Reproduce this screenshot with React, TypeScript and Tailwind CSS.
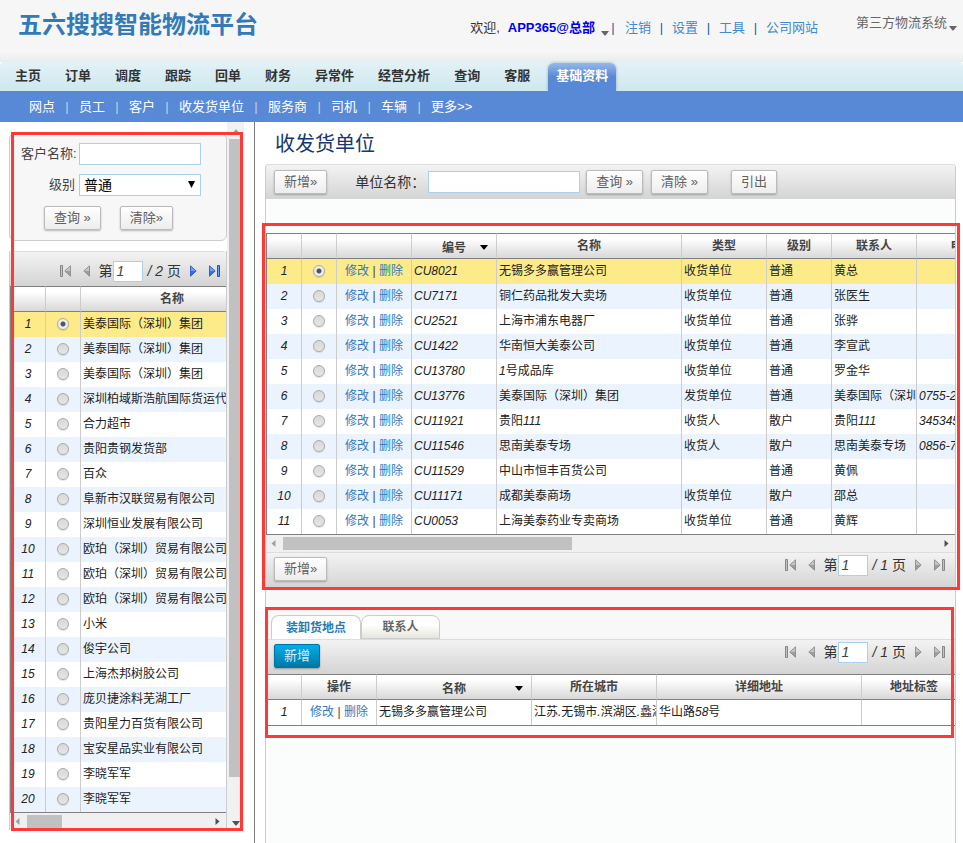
import type { ReactNode } from "react";

const NAV = ["主页", "订单", "调度", "跟踪", "回单", "财务", "异常件", "经营分析", "查询", "客服"];
const SUB_NAV = ["网点", "员工", "客户", "收发货单位", "服务商", "司机", "车辆", "更多>>"];
const USER_LINKS = ["注销", "设置", "工具", "公司网站"];

const CUSTOMERS = [
  "美泰国际（深圳）集团",
  "美泰国际（深圳）集团",
  "美泰国际（深圳）集团",
  "深圳柏域斯浩航国际货运代",
  "合力超市",
  "贵阳贵钢发货部",
  "百众",
  "阜新市汉联贸易有限公司",
  "深圳恒业发展有限公司",
  "欧珀（深圳）贸易有限公司",
  "欧珀（深圳）贸易有限公司",
  "欧珀（深圳）贸易有限公司",
  "小米",
  "俊宇公司",
  "上海杰邦树胶公司",
  "庞贝捷涂料芜湖工厂",
  "贵阳星力百货有限公司",
  "宝安星品实业有限公司",
  "李晓军军",
  "李晓军军",
];

const UNITS = [
  ["CU8021", "无锡多多赢管理公司", "收货单位", "普通", "黄总", ""],
  ["CU7171", "铜仁药品批发大卖场", "收货单位", "普通", "张医生", ""],
  ["CU2521", "上海市浦东电器厂", "收货单位", "普通", "张骅", ""],
  ["CU1422", "华南恒大美泰公司", "收货单位", "普通", "李宣武", ""],
  ["CU13780", "1号成品库", "收货单位", "普通", "罗金华", ""],
  ["CU13776", "美泰国际（深圳）集团", "发货单位", "普通", "美泰国际（深圳）集团", "0755-2"],
  ["CU11921", "贵阳111", "收货人", "散户", "贵阳111", "345345"],
  ["CU11546", "思南美泰专场", "收货人", "散户", "思南美泰专场", "0856-7"],
  ["CU11529", "中山市恒丰百货公司", "", "普通", "黄佩", ""],
  ["CU11171", "成都美泰商场", "收货单位", "散户", "邵总", ""],
  ["CU0053", "上海美泰药业专卖商场", "收货单位", "普通", "黄辉", ""],
];

function Caret({ className }: { className: string }) {
  return (
    <svg viewBox="0 0 8 5" className={`h-[5px] w-2 shrink-0 fill-current ${className}`} aria-hidden="true">
      <path d="M0 0h8L4.5 4.5h-1z" />
    </svg>
  );
}

function GrayButton({ children }: { children: ReactNode }) {
  return (
    <button
      type="button"
      className="h-6 shrink-0 whitespace-nowrap rounded-xs border border-[#bbb] bg-linear-to-b from-white to-[#ededed] px-[9px] text-[13px] leading-5 text-[#606060] shadow-[0_1px_2px_rgba(0,0,0,0.25)]"
    >
      {children}
    </button>
  );
}

function StepIcon({ kind, active }: { kind: "first" | "prev" | "next" | "last"; active?: boolean }) {
  const flip = kind === "next" || kind === "last";
  const bar = kind === "first" || kind === "last";
  const dark = active ? "#1c50c8" : "#858585";
  const light = active ? "#6ba0f2" : "#c4c4c4";
  const base = bar ? 4 : 0;
  const width = bar ? 11 : 7;
  return (
    <svg width={width} height="12" viewBox={`0 0 ${width} 12`} className={flip ? "-scale-x-100" : ""} aria-hidden="true">
      {bar && <path d="M.5.5h2v11h-2z" fill={light} stroke={dark} strokeWidth="1" />}
      <path d={`M${base + 6.5} .8v10.4L${base + 0.8} 6z`} fill={light} stroke={dark} strokeWidth="0.8" />
      <path d={`M${base + 6.5} 6v5.2L${base + 0.8} 6z`} fill={dark} opacity="0.6" />
    </svg>
  );
}

function Pager({ total, active, label }: { total: number; active?: boolean; label: string }) {
  return (
    <div className="flex shrink-0 items-center text-sm text-[#333] italic">
      <button type="button" aria-label="首页" className="mr-3">
        <StepIcon kind="first" />
      </button>
      <button type="button" aria-label="上一页" className="mr-2">
        <StepIcon kind="prev" />
      </button>
      <label className="flex items-center">
        <span className="leading-5">第</span>
        <input
          aria-label={label}
          defaultValue="1"
          className="ml-px h-[21px] w-[30px] border border-[#a9d2e8] bg-white pl-[2px] text-sm italic text-[#444] outline-none"
        />
      </label>
      <span className="ml-1 leading-5">/ {total}</span>
      <span className="mr-[9px] ml-1 leading-5">页</span>
      <button type="button" aria-label="下一页" className="mr-3">
        <StepIcon kind="next" active={active} />
      </button>
      <button type="button" aria-label="末页">
        <StepIcon kind="last" active={active} />
      </button>
    </div>
  );
}

function Th({ children, sort }: { children?: ReactNode; sort?: boolean }) {
  return (
    <th className="h-[26px] overflow-hidden whitespace-nowrap border-y border-r border-y-[#808080] border-r-[#ccc] bg-linear-to-b from-white from-20% to-[#d8d8d8] p-0 text-center text-xs leading-4 font-bold text-[#444]">
      {sort ? (
        <span className="grid grid-cols-[1fr_auto_1fr] items-center pt-[3px]">
          <span />
          <span>{children}</span>
          <Caret className="mr-2 justify-self-end text-black" />
        </span>
      ) : (
        children
      )}
    </th>
  );
}

function Td({ children, center }: { children?: ReactNode; center?: boolean }) {
  return (
    <td
      className={`h-[25px] overflow-hidden whitespace-nowrap border-r border-[#ccc] pt-0 pb-[2px] leading-4 ${center ? "text-center" : "pl-[2px]"}`}
    >
      {children}
    </td>
  );
}

function Radio({ name, label, checked }: { name: string; label: string; checked: boolean }) {
  return (
    <input
      type="radio"
      name={name}
      aria-label={label}
      defaultChecked={checked}
      className="mx-auto block size-3 appearance-none rounded-full border border-[#aaa] bg-linear-to-b from-[#d8d8d8] to-[#e6e6e6] shadow-[0_1px_1px_rgba(0,0,0,0.12)] checked:bg-[radial-gradient(circle,#555_0_2px,#eee_3px)]"
    />
  );
}

function RowLinks() {
  return (
    <span className="flex items-center justify-center text-[#337ab7]">
      <a href="#edit">修改</a>
      <span className="w-2.5 text-center not-italic text-[#444]">|</span>
      <a href="#delete">删除</a>
    </span>
  );
}

function rowColor(i: number) {
  if (i === 0) return "bg-[#fceb88]";
  return i % 2 ? "bg-[#ebf4fe]" : "bg-white";
}

const TABLE = "table-fixed border-separate border-spacing-0 text-xs text-[#222] italic";

function HScroll({ thumb }: { thumb: string }) {
  return (
    <div className="flex h-[17px] items-center bg-[#f0f0f0] px-1" aria-hidden="true">
      <svg className="size-[7px] fill-[#a0a0a0]" viewBox="0 0 7 7">
        <path d="M5.5 0v7L1.5 3.5z" />
      </svg>
      <div className={`ml-[6px] h-[13px] bg-[#c1c1c1] ${thumb}`} />
      <svg className="mr-px ml-auto size-[7px] fill-[#505050]" viewBox="0 0 7 7">
        <path d="M1.5 0v7l4-3.5z" />
      </svg>
    </div>
  );
}

function Header() {
  return (
    <header>
      <div className="flex h-[62px] items-start bg-linear-to-b from-[#f6f6f6] from-85% to-[#e6ecec] pr-1.5 pl-[18px]">
        <h1 className="mt-[7px] text-2xl leading-9 font-bold whitespace-nowrap text-[#337ab7]">五六搜搜智能物流平台</h1>
        <div className="mt-[18px] ml-auto flex items-center text-[13px] leading-5 whitespace-nowrap text-[#333]">
          <span className="mr-2">欢迎,</span>
          <a href="#account" className="font-bold text-[#0000ee]">
            APP365@总部
          </a>
          <Caret className="mt-2.5 ml-1.5 text-[#666]" />
          {USER_LINKS.map((item, i) => (
            <span key={item} className="flex">
              <span className={`text-center text-[#1c5ca6] ${i === 0 ? "mr-2 w-2" : "w-[21px]"}`}>|</span>
              <a href="#user" className="text-[#428bca]">
                {item}
              </a>
            </span>
          ))}
        </div>
        <button type="button" className="mt-[13px] ml-[38px] flex items-center text-[13px] leading-5 whitespace-nowrap text-[#666]">
          第三方物流系统
          <Caret className="mt-2.5 ml-[2px]" />
        </button>
      </div>
      <nav className="flex h-[29px] items-stretch rounded-t bg-linear-to-b from-[#e3f2f7] to-[#cde8ee] pl-[3px] text-[13px] leading-7 font-bold whitespace-nowrap text-[#333]">
        {NAV.map((item) => (
          <a key={item} href="#nav" className="px-3">
            {item}
          </a>
        ))}
        <a
          href="#base"
          className="mt-px ml-1.5 rounded-t-md bg-linear-to-b from-[#96b8e8] to-[#5889d7] to-50% px-2 leading-[26px] text-white shadow-[0_0_3px_rgba(0,0,0,0.3)]"
        >
          基础资料
        </a>
      </nav>
      <nav className="relative flex h-[31px] items-center bg-[#5889d7] pl-[29px] text-[13px] leading-5 whitespace-nowrap text-white">
        {SUB_NAV.map((item, i) => (
          <span key={item} className="flex">
            {i > 0 && <span className="w-6 text-center text-[#c8d0dc]">|</span>}
            <a href="#sub">{item}</a>
          </span>
        ))}
      </nav>
    </header>
  );
}

function Sidebar() {
  const field = "h-[22px] w-[122px] border border-[#a9d2e8] bg-white outline-none";
  return (
    <aside className="w-[255px] shrink-0 border-r border-[#808080] pr-2.5 pl-[9px]">
      <div className="relative flex">
        <div className="min-w-0 flex-1 pt-[11px]">
          <form className="flex flex-col rounded-md border border-[#ccc] bg-[#f7f7f7] pt-[9px] pb-2.5 pl-[11px] text-[13px] leading-5 text-[#444]">
            <div className="flex items-center">
              <label htmlFor="customer" className="w-[54px] text-right whitespace-nowrap">
                客户名称:
              </label>
              <input id="customer" className={`ml-1 ${field}`} />
            </div>
            <div className="mt-[9px] flex items-center">
              <label htmlFor="level" className="w-[54px] text-right">
                级别
              </label>
              <div className="relative ml-1 flex">
                <select id="level" className={`appearance-none pl-1 text-sm leading-5 text-black ${field}`}>
                  <option>普通</option>
                </select>
                <svg className="pointer-events-none absolute top-[7px] right-1.5 size-[7px]" viewBox="0 0 7 7" aria-hidden="true">
                  <path d="M0 0h7L3.5 7z" />
                </svg>
              </div>
            </div>
            <div className="mt-2.5 ml-[23px] flex gap-[19px]">
              <GrayButton>查询 »</GrayButton>
              <GrayButton>清除»</GrayButton>
            </div>
          </form>
          <div className="mt-2.5 border-r border-l border-[#ccc]">
            <div className="flex h-[35px] items-center justify-end rounded-t border-t border-[#ddd] bg-linear-to-b from-[#f3f3f3] to-[#d4d4d4] pt-1 pr-1.5">
              <Pager total={2} active label="客户页码" />
            </div>
            <div className="overflow-hidden border-b border-l border-[#808080]">
              <table className={`w-[253px] ${TABLE}`}>
                <colgroup>
                  <col className="w-[35px]" />
                  <col className="w-[35px]" />
                  <col className="w-[183px]" />
                </colgroup>
                <thead>
                  <tr>
                    <Th />
                    <Th />
                    <Th>名称</Th>
                  </tr>
                </thead>
                <tbody>
                  {CUSTOMERS.map((name, i) => (
                    <tr key={i} className={rowColor(i)}>
                      <Td center>{i + 1}</Td>
                      <Td center>
                        <Radio name="customer-row" label={name} checked={i === 0} />
                      </Td>
                      <Td>{name}</Td>
                    </tr>
                  ))}
                </tbody>
              </table>
            </div>
            <HScroll thumb="w-[35px]" />
          </div>
        </div>
        <div className="flex w-[17px] shrink-0 flex-col items-center bg-[#f1f1f1] pt-[7px] pb-1" aria-hidden="true">
          <Caret className="rotate-180 text-[#a0a0a0]" />
          <div className="mt-[5px] h-[638px] w-[13px] bg-[#c1c1c1]" />
          <Caret className="mt-auto text-[#505050]" />
        </div>
        <div className="pointer-events-none absolute top-2.5 right-px -bottom-px left-[2px] border-3 border-[#ff3838]" />
      </div>
    </aside>
  );
}

const BAR = "flex items-center bg-linear-to-b from-[#f3f3f3] to-[#d4d4d4] border-t border-[#ddd]";

function UnitTable() {
  return (
    <div className="relative z-10 mt-[34px]">
      <div className="overflow-hidden border-b border-l border-[#808080]">
        <table className={`w-[742px] ${TABLE}`}>
          <colgroup>
            <col className="w-[35px]" />
            <col className="w-[35px]" />
            <col className="w-[75px]" />
            <col className="w-[85px]" />
            <col className="w-[185px]" />
            <col className="w-[85px]" />
            <col className="w-[65px]" />
            <col className="w-[85px]" />
            <col className="w-[92px]" />
          </colgroup>
          <thead>
            <tr>
              <Th />
              <Th />
              <Th />
              <Th sort>编号</Th>
              <Th>名称</Th>
              <Th>类型</Th>
              <Th>级别</Th>
              <Th>联系人</Th>
              <Th>电话</Th>
            </tr>
          </thead>
          <tbody>
            {UNITS.map((row, i) => (
              <tr key={row[0]} className={rowColor(i)}>
                <Td center>{i + 1}</Td>
                <Td center>
                  <Radio name="unit-row" label={row[1]} checked={i === 0} />
                </Td>
                <Td center>
                  <RowLinks />
                </Td>
                {row.map((cell, j) => (
                  <Td key={j}>{cell}</Td>
                ))}
              </tr>
            ))}
          </tbody>
        </table>
      </div>
      <HScroll thumb="w-[289px]" />
      <div className={`h-9 justify-between pr-2.5 pb-[3px] pl-2 ${BAR}`}>
        <GrayButton>新增»</GrayButton>
        <div className="-mt-2">
          <Pager total={1} label="单位页码" />
        </div>
      </div>
      <div className="pointer-events-none absolute -top-2.5 -right-[5px] -bottom-[2px] -left-1 border-3 border-[#ff3838]" />
    </div>
  );
}

function AddressPanel() {
  return (
    <div className="relative bg-[#fbfdfc]">
      <div className="bg-[#f8f8f8] pt-[27px]">
        <div role="tablist" className="flex h-6 pl-[5px] text-xs leading-[22px] font-bold">
          <button
            type="button"
            role="tab"
            aria-selected="true"
            className="w-[90px] rounded-t-lg border border-b-0 border-[#ccc] bg-white text-[#2a7ab0]"
          >
            装卸货地点
          </button>
          <button
            type="button"
            role="tab"
            aria-selected="false"
            className="w-[79px] rounded-t-lg border border-[#ccc] bg-linear-to-b from-white from-40% to-[#e6e6de] text-[#666]"
          >
            联系人
          </button>
        </div>
      </div>
      <div className={`h-[35px] justify-between pr-2.5 pb-[2px] pl-2 ${BAR}`}>
        <button
          type="button"
          className="h-6 rounded-xs border border-[#0076a3] bg-linear-to-b from-[#00adee] to-[#0078a5] px-[9px] text-[13px] leading-5 text-[#d9eef7] shadow-[0_1px_2px_rgba(0,0,0,0.3)]"
        >
          新增
        </button>
        <div className="-mt-2">
          <Pager total={1} label="地址页码" />
        </div>
      </div>
      <div className="overflow-hidden border-b border-l border-[#808080]">
        <table className={`w-[700px] ${TABLE}`}>
          <colgroup>
            <col className="w-[35px]" />
            <col className="w-[75px]" />
            <col className="w-[155px]" />
            <col className="w-[125px]" />
            <col className="w-[205px]" />
            <col className="w-[105px]" />
          </colgroup>
          <thead>
            <tr>
              <Th />
              <Th>操作</Th>
              <Th sort>名称</Th>
              <Th>所在城市</Th>
              <Th>详细地址</Th>
              <Th>地址标签</Th>
            </tr>
          </thead>
          <tbody>
            <tr className="bg-white">
              <Td center>1</Td>
              <Td center>
                <RowLinks />
              </Td>
              <Td>无锡多多赢管理公司</Td>
              <Td>江苏.无锡市.滨湖区.蠡湖</Td>
              <Td>华山路58号</Td>
              <Td />
            </tr>
          </tbody>
        </table>
      </div>
      <div className="pointer-events-none absolute top-[19px] right-px -bottom-3 -left-px border-3 border-[#ff3838]" />
    </div>
  );
}

export default function App() {
  return (
    <div className="flex min-h-screen flex-col overflow-hidden bg-white font-['Liberation_Sans','Noto_Sans_CJK_SC',sans-serif] [font-synthesis-style:none]">
      <Header />
      <div className="flex flex-1">
        <Sidebar />
        <main className="flex min-w-0 flex-1 flex-col pr-[7px] pl-2.5">
          <h2 className="h-[42px] pl-2.5 text-xl leading-[44px] text-[#15376e]">收发货单位</h2>
          <section className="flex-1 rounded-t-sm border-r border-l border-[#ccc] bg-[#fbfdfc]">
            <form className={`h-[35px] rounded-t-sm pb-px pl-2 ${BAR}`}>
              <GrayButton>新增»</GrayButton>
              <label htmlFor="unit" className="ml-7 text-sm leading-5 whitespace-nowrap text-[#333]">
                单位名称：
              </label>
              <input id="unit" className="ml-[3px] h-[22px] w-[152px] border border-[#a9d2e8] bg-white outline-none" />
              <div className="ml-1.5 flex gap-2">
                <GrayButton>查询 »</GrayButton>
                <GrayButton>清除 »</GrayButton>
              </div>
              <div className="ml-[23px] flex">
                <GrayButton>引出</GrayButton>
              </div>
            </form>
            <UnitTable />
            <AddressPanel />
          </section>
        </main>
      </div>
    </div>
  );
}
